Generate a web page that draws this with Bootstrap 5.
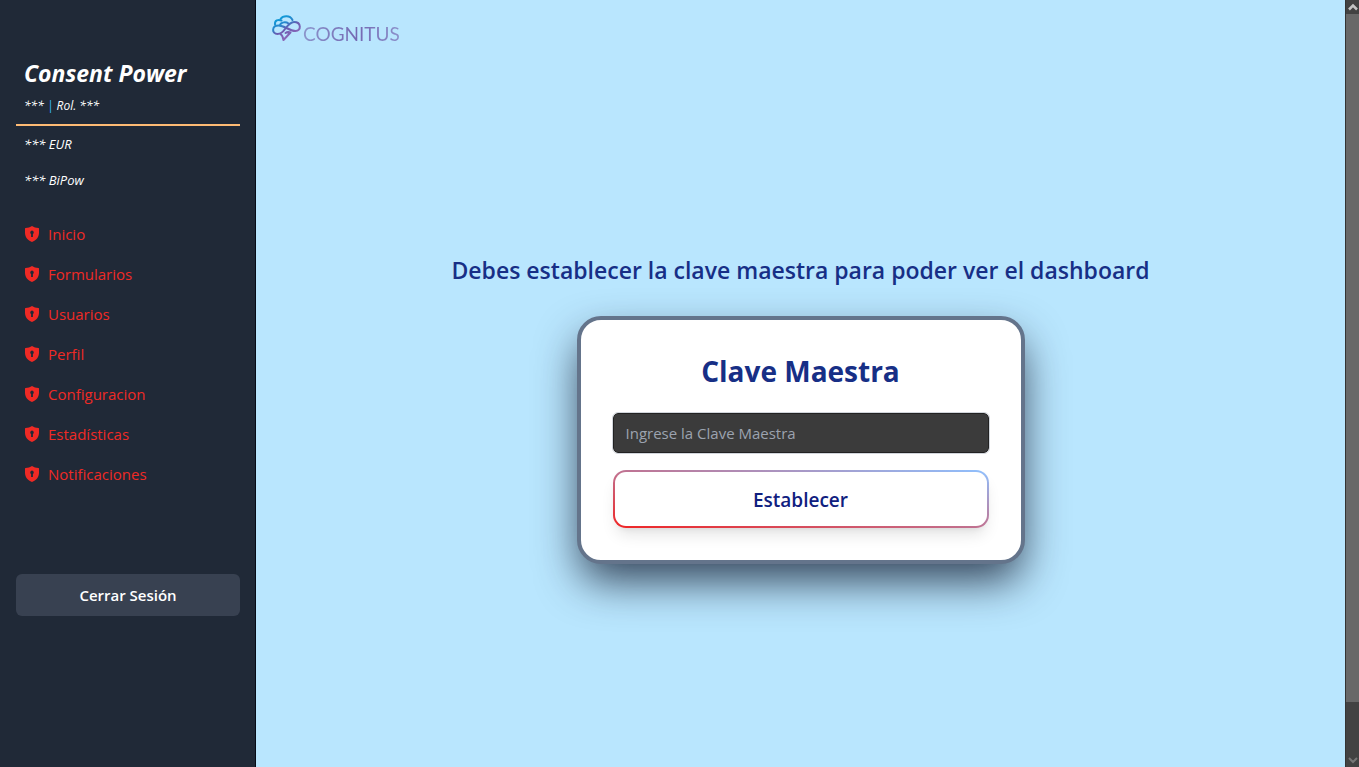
<!DOCTYPE html>
<html lang="es">
<head>
<meta charset="utf-8">
<meta name="viewport" content="width=device-width, initial-scale=1">
<title>Consent Power</title>
<link href="https://cdn.jsdelivr.net/npm/bootstrap@5.3.0/dist/css/bootstrap.min.css" rel="stylesheet">
<style>
  body { font-family: "Open Sans", "Noto Sans", sans-serif; font-size: 15px; line-height: 24px; background: #b9e6fe; }
  .side-panel { width: 256px; background: #202937; border-right: 1px solid #060b16; padding: 56px 15px 0 16px; }
  .brand-title { font-size: 23px; line-height: 34px; }
  .side-info { font-size: 13px; line-height: 20px; }
  .role-line { font-size: 12px; padding: 6px 8px 8px; border-bottom: 2px solid #fdba74; }
  .bar-mark { color: #38bdf8; }
  .side-nav { margin-top: 16px; }
  .side-nav a { color: #ef2a25; padding: 8px; line-height: 24px; }
  .btn-logout { margin-top: 80px; background: #384151; color: #fff; font-size: 15px; line-height: 24px; padding: 9px; border: 0; border-radius: 6px; }
  .btn-logout:hover { background: #4b5563; color: #fff; }
  .logo-link { padding: 15px 16px 13px; gap: 2px; }
  .logo-word { font-family: Lato, sans-serif; font-weight: 400; font-size: 19px; line-height: 24px; margin-top: 7px;
    background: linear-gradient(90deg, #8c96cc, #7468b2 55%, #8c90ca); -webkit-background-clip: text; background-clip: text; color: transparent; }
  .center-stage { padding: 0 16px 8px; }
  .notice { font-size: 23px; line-height: 32px; color: #172f86; margin-bottom: 30px; }
  .key-card { width: 448px; max-width: 100%; padding: 32px; border: 4px solid #64748b; border-radius: 24px; background: #fff;
    box-shadow: 0 20px 44px -4px rgba(15, 23, 42, .8); }
  .key-title { font-size: 28px; line-height: 36px; color: #172f86; margin: 1px 0 24px; }
  .key-input, .key-input:focus { background: #3b3b3b; border: 1px solid #222; border-radius: 5px; color: #fff; font-size: 15px; line-height: 24px; padding: 7px 12px; height: 40px; outline: 1px solid #d1d5db; }
  .key-input::placeholder { color: #9ca3af; opacity: 1; }
  .btn-key { margin-top: 17px; height: 58px; padding: 8px 12px 6px; font-size: 19px; color: #10207f; border: 2px solid transparent; border-radius: 13px;
    background: linear-gradient(#fff, #fff) padding-box, linear-gradient(to top right, #f02424, #8fc1ff) border-box;
    box-shadow: 0 10px 15px -3px rgba(0, 0, 0, .1), 0 4px 6px -4px rgba(0, 0, 0, .1); }
  .btn-key:hover { color: #10207f; }
  .scroll-rail { width: 14px; background: #424242; border-left: 1px solid #333; }
  .scroll-rail svg { display: block; flex: none; }
  .scroll-grip { height: 90vh; max-height: calc(100vh - 79px); background: #686868; margin-bottom: auto; }
</style>
</head>
<body>
<svg class="d-none" aria-hidden="true">
  <symbol id="shield" viewBox="0 0 16 16">
    <path fill="#ef2a25" fill-rule="evenodd" d="M8 0C6.200 1.300 3.900 1.900 1.500 2.100c-.3 0-.5.200-.5.500v4.200c0 4.500 2.800 7.600 7 9.200 4.200-1.600 7-4.700 7-9.200V2.600c0-.3-.2-.5-.5-.5C12.100 1.900 9.800 1.300 8 0zM8 4.600a1.900 1.900 0 0 1 .9 3.500v3H7.100v-3A1.900 1.900 0 0 1 8 4.600z"/>
  </symbol>
</svg>
<div class="d-flex vh-100 overflow-hidden">
  <aside class="side-panel flex-shrink-0">
    <header class="fst-italic text-white">
      <h1 class="brand-title fw-bold m-0 px-2">Consent Power</h1>
      <div class="side-info role-line">*** <span class="bar-mark">|</span> Rol. ***</div>
      <div class="side-info px-2 py-2">*** EUR</div>
      <div class="side-info px-2 py-2">*** BiPow</div>
    </header>
    <nav class="side-nav nav flex-column flex-nowrap">
      <a class="d-flex align-items-center gap-2 text-decoration-none" href="#"><svg width="16" height="16"><use href="#shield"/></svg>Inicio</a>
      <a class="d-flex align-items-center gap-2 text-decoration-none" href="#"><svg width="16" height="16"><use href="#shield"/></svg>Formularios</a>
      <a class="d-flex align-items-center gap-2 text-decoration-none" href="#"><svg width="16" height="16"><use href="#shield"/></svg>Usuarios</a>
      <a class="d-flex align-items-center gap-2 text-decoration-none" href="#"><svg width="16" height="16"><use href="#shield"/></svg>Perfil</a>
      <a class="d-flex align-items-center gap-2 text-decoration-none" href="#"><svg width="16" height="16"><use href="#shield"/></svg>Configuracion</a>
      <a class="d-flex align-items-center gap-2 text-decoration-none" href="#"><svg width="16" height="16"><use href="#shield"/></svg>Estadísticas</a>
      <a class="d-flex align-items-center gap-2 text-decoration-none" href="#"><svg width="16" height="16"><use href="#shield"/></svg>Notificaciones</a>
    </nav>
    <button type="button" class="btn btn-logout w-100 fw-semibold">Cerrar Sesión</button>
  </aside>

  <main class="flex-grow-1 d-flex flex-column">
    <a class="logo-link d-inline-flex align-self-start text-decoration-none" href="#">
      <svg width="29" height="28" viewBox="0 0 29 28" fill="none" stroke-width="2" stroke-linecap="round" stroke-linejoin="round" aria-hidden="true">
        <defs>
          <linearGradient id="cloud" gradientUnits="userSpaceOnUse" x1="7" y1="3" x2="17" y2="22">
            <stop offset="0" stop-color="#0e9bd8"/><stop offset=".35" stop-color="#2a86cc"/><stop offset=".6" stop-color="#6a5bb0"/><stop offset="1" stop-color="#8a68b8"/>
          </linearGradient>
        </defs>
        <g stroke="url(#cloud)">
          <path d="M3 9.500C2.500 5.500 6 4 9.500 5.500"/>
          <path d="M8.500 4C11 .5 18 0 20.500 5"/>
          <path d="M8 10C9 7 14 6.500 16.500 8.500"/>
          <path d="M13 14C16 10 18.500 7 22 7C29.500 7 29.500 16 23.500 16C17 16 13 10.500 6.500 10.500C-.5 10.500-.5 19 5.500 19C9 19 11 17 13 14"/>
          <path d="M8.500 19C10 20 11 22 11.500 25L18.500 17.500C17 17 15 17 13.500 18"/>
        </g>
      </svg>
      <span class="logo-word">COGNITUS</span>
    </a>
    <section class="center-stage flex-grow-1 d-flex flex-column align-items-center justify-content-center">
      <h2 class="notice fw-semibold text-center">Debes establecer la clave maestra para poder ver el dashboard</h2>
      <form class="key-card">
        <h3 class="key-title fw-bold text-center"><label for="master-key">Clave Maestra</label></h3>
        <input id="master-key" type="password" class="form-control key-input" placeholder="Ingrese la Clave Maestra">
        <button type="button" class="btn btn-key w-100 fw-semibold">Establecer</button>
      </form>
    </section>
  </main>

  <div class="scroll-rail d-flex flex-column flex-shrink-0" aria-hidden="true">
    <svg width="13" height="14" viewBox="0 0 13 14"><path d="M3 9.500L7 5.500L11 9.500" fill="none" stroke="#c4c4c4" stroke-width="2.500"/></svg>
    <div class="scroll-grip"></div>
    <svg width="13" height="14" viewBox="0 0 13 14"><path d="M3 5L7 9L11 5" fill="none" stroke="#777" stroke-width="2"/></svg>
  </div>
</div>
<script src="https://cdn.jsdelivr.net/npm/bootstrap@5.3.0/dist/js/bootstrap.bundle.min.js"></script>
</body>
</html>
